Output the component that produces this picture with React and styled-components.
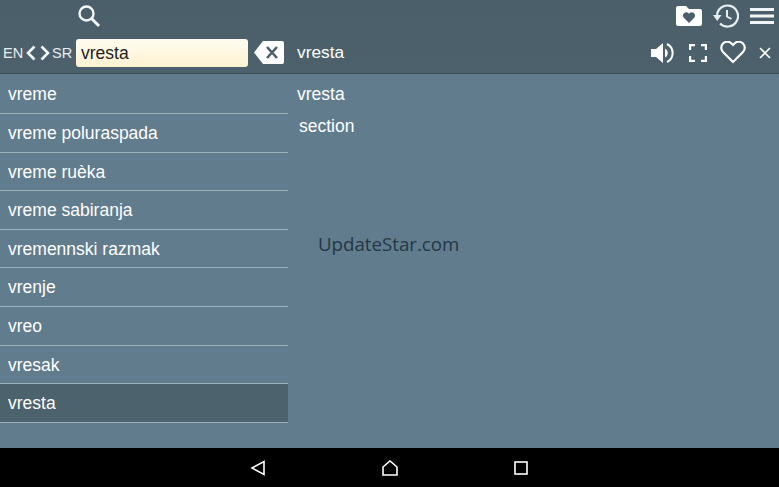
import React from "react";
import styled, { createGlobalStyle } from "styled-components";

const GlobalStyle = createGlobalStyle`
  html, body {
    margin: 0;
    padding: 0;
    background: #000;
  }
  body {
    font-family: "Liberation Sans", Arial, sans-serif;
  }
`;

const Screen = styled.div`
  position: relative;
  width: 779px;
  height: 487px;
  display: flex;
  flex-direction: column;
  overflow: hidden;
  background: #617c8d;
`;

const Header = styled.header`
  height: 73px;
  flex: none;
  display: flex;
  flex-direction: column;
  background: linear-gradient(#4a5f69, #4c616c);
  border-bottom: 1px solid #3d4f57;
`;

const TopBar = styled.div`
  height: 32px;
  display: flex;
  align-items: center;
  padding: 0 5px 0 77px;
`;

const TopIcons = styled.div`
  margin-left: auto;
  display: flex;
  align-items: center;
  gap: 11px;
`;

const SearchBar = styled.div`
  height: 41px;
  display: flex;
  align-items: center;
`;

const SearchSide = styled.div`
  width: 288px;
  flex: none;
  display: flex;
  align-items: center;
  padding-left: 3px;
  box-sizing: border-box;
  color: #e8eef1;
`;

const Lang = styled.span`
  width: 20px;
  font-size: 14.5px;
`;

const Arrows = styled.div`
  display: flex;
  gap: 4px;
  margin: 0 1px 0 2px;
`;

const SearchInput = styled.div`
  width: 172px;
  height: 28px;
  margin-left: 4px;
  padding-left: 5px;
  box-sizing: border-box;
  border-radius: 3px;
  background: linear-gradient(#fffdf0, #fdf2d0);
  color: #222;
  font-size: 17.5px;
  line-height: 28px;
`;

const ClearButton = styled.span`
  display: flex;
  margin-left: 6px;
`;

const TitleSide = styled.div`
  flex: 1;
  display: flex;
  align-items: center;
  padding: 0 8px 0 9px;
  color: #fff;
  font-size: 17.3px;
`;

const TitleIcons = styled.div`
  margin-left: auto;
  display: flex;
  align-items: center;
  gap: 13px;
`;

const Body = styled.main`
  flex: 1;
  display: flex;
  min-height: 0;
`;

const WordList = styled.ul`
  width: 288px;
  flex: none;
  margin: 0;
  padding: 1.4px 0 0;
  list-style: none;
`;

const WordRow = styled.li`
  height: 38.6px;
  box-sizing: border-box;
  padding-left: 8px;
  line-height: 38px;
  font-size: 17.5px;
  color: #fff;
  border-bottom: 1px solid #9bb0bb;
  background: ${(props) => (props.$active ? "#4c626d" : "transparent")};
`;

const Article = styled.article`
  flex: 1;
  padding: 10px 9px;
  color: #fff;
  font-size: 17.5px;
`;

const Headword = styled.div`
  line-height: 21px;
`;

const Meaning = styled.div`
  margin: 11px 0 0 2px;
  line-height: 21px;
`;

const Watermark = styled.div`
  position: absolute;
  left: 318px;
  top: 231px;
  font-family: "Open Sans", sans-serif;
  font-size: 18.7px;
  line-height: 26px;
  color: #243845;
`;

const NavBar = styled.nav`
  height: 39px;
  flex: none;
  background: #000;
  display: flex;
  align-items: center;
  padding-left: 250px;
  gap: 116px;
`;

const words = [
  "vreme",
  "vreme poluraspada",
  "vreme ruèka",
  "vreme sabiranja",
  "vremennski razmak",
  "vrenje",
  "vreo",
  "vresak",
  "vresta",
];

function SearchIcon() {
  return (
    <svg width="24" height="24" viewBox="0 0 24 24" fill="none" stroke="#f2f5f6">
      <circle cx="9.5" cy="9.5" r="7" strokeWidth="2.4" />
      <path d="M14.8 14.8 L22 22" strokeWidth="3" />
    </svg>
  );
}

function FolderHeartIcon() {
  return (
    <svg width="26" height="20" viewBox="0 0 26 20">
      <path
        fill="#fff"
        d="M2 0h8l3 3h11a2 2 0 0 1 2 2v13a2 2 0 0 1-2 2H2a2 2 0 0 1-2-2V2a2 2 0 0 1 2-2z"
      />
      <path
        fill="#4a5f69"
        d="M13 17l-5.2-5.2a3.3 3.3 0 0 1 4.7-4.6l.5.5.5-.5a3.3 3.3 0 0 1 4.7 4.6z"
      />
    </svg>
  );
}

function HistoryIcon() {
  return (
    <svg width="26" height="24" viewBox="0 0 26 24" fill="none" stroke="#e8eef1">
      <path d="M4 12a10.5 10.5 0 1 1 3 7.4" strokeWidth="2.2" />
      <path d="M0 11h8.5L4.2 17z" fill="#e8eef1" stroke="none" />
      <path d="M14 6v6.5l4.5 2.5" strokeWidth="2" />
    </svg>
  );
}

function MenuIcon() {
  return (
    <svg width="24" height="18" viewBox="0 0 24 18" fill="#f2f5f6">
      <rect x="0" y="1" width="24" height="3" />
      <rect x="0" y="7.5" width="24" height="3" />
      <rect x="0" y="14" width="24" height="3" />
    </svg>
  );
}

function Chevron({ flip }) {
  return (
    <svg width="11" height="16" viewBox="0 0 11 16" fill="none" stroke="#f2f5f6" strokeWidth="2.6">
      <path d={flip ? "M1.5 1.5 L8 8 L1.5 14.5" : "M9.5 1.5 L3 8 L9.5 14.5"} />
    </svg>
  );
}

function ClearIcon() {
  return (
    <svg width="30" height="23" viewBox="0 0 30 23">
      <path fill="#fff" d="M9 0h19a2 2 0 0 1 2 2v19a2 2 0 0 1-2 2H9L0 11.5z" />
      <path d="M13 6l10 11M23 6L13 17" stroke="#4a5f69" strokeWidth="2.6" />
    </svg>
  );
}

function SpeakerIcon() {
  return (
    <svg width="25" height="22" viewBox="0 0 25 22" fill="none">
      <path fill="#fff" d="M0 7h5l7-6v20l-7-6H0z" />
      <path fill="#fff" d="M14 6.5a5 5 0 0 1 0 9z" />
      <path d="M16 2a10 10 0 0 1 0 18" stroke="#fff" strokeWidth="2" />
    </svg>
  );
}

function FullscreenIcon() {
  return (
    <svg width="18" height="18" viewBox="0 0 18 18" fill="none" stroke="#fff" strokeWidth="2.4">
      <path d="M1 6V1h5M12 1h5v5M17 12v5h-5M6 17H1v-5" />
    </svg>
  );
}

function HeartIcon() {
  return (
    <svg width="26" height="23" viewBox="0 0 26 23" fill="none" stroke="#fff" strokeWidth="2.2">
      <path d="M13 21L3 11a6 6 0 0 1 8.5-8.5L13 4l1.5-1.5A6 6 0 0 1 23 11z" />
    </svg>
  );
}

function CloseIcon() {
  return (
    <svg width="12" height="12" viewBox="0 0 12 12" fill="none" stroke="#fff" strokeWidth="1.6">
      <path d="M1 1l10 10M11 1L1 11" />
    </svg>
  );
}

function BackIcon() {
  return (
    <svg width="16" height="16" viewBox="0 0 16 16" fill="none" stroke="#fff" strokeWidth="1.6">
      <path d="M2 8L14 1.5v13z" />
    </svg>
  );
}

function HomeIcon() {
  return (
    <svg width="16" height="16" viewBox="0 0 16 16" fill="none" stroke="#fff" strokeWidth="1.6">
      <path d="M1 7L8 1l7 6v8H1z" />
    </svg>
  );
}

function RecentIcon() {
  return (
    <svg width="14" height="14" viewBox="0 0 14 14" fill="none" stroke="#fff" strokeWidth="1.6">
      <rect x="1" y="1" width="12" height="12" />
    </svg>
  );
}

export default function App() {
  return (
    <Screen>
      <GlobalStyle />
      <Header>
        <TopBar>
          <SearchIcon />
          <TopIcons>
            <FolderHeartIcon />
            <HistoryIcon />
            <MenuIcon />
          </TopIcons>
        </TopBar>
        <SearchBar>
          <SearchSide>
            <Lang>EN</Lang>
            <Arrows>
              <Chevron />
              <Chevron flip />
            </Arrows>
            <Lang>SR</Lang>
            <SearchInput>vresta</SearchInput>
            <ClearButton>
              <ClearIcon />
            </ClearButton>
          </SearchSide>
          <TitleSide>
            vresta
            <TitleIcons>
              <SpeakerIcon />
              <FullscreenIcon />
              <HeartIcon />
              <CloseIcon />
            </TitleIcons>
          </TitleSide>
        </SearchBar>
      </Header>
      <Body>
        <WordList>
          {words.map((word) => (
            <WordRow key={word} $active={word === "vresta"}>
              {word}
            </WordRow>
          ))}
        </WordList>
        <Article>
          <Headword>vresta</Headword>
          <Meaning>section</Meaning>
        </Article>
      </Body>
      <NavBar>
        <BackIcon />
        <HomeIcon />
        <RecentIcon />
      </NavBar>
      <Watermark>UpdateStar.com</Watermark>
    </Screen>
  );
}
